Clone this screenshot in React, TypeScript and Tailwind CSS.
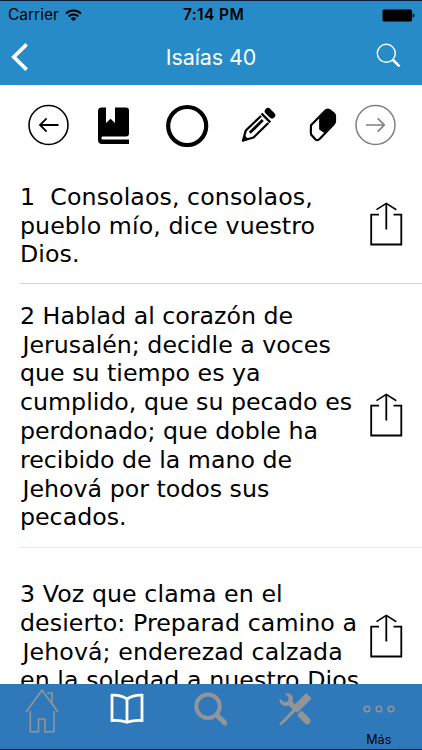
import React from "react";

const verses = [
  {
    id: 1,
    rowClass: "h-[119px] border-[#d2d2d2]",
    textClass: "pt-[4px] tracking-[0.08px]",
    iconClass: "",
    lines: ["1\u00a0 Consolaos, consolaos,", "pueblo mío, dice vuestro", "Dios."],
  },
  {
    id: 2,
    rowClass: "h-[264px] border-[#e8e8e8]",
    textClass: "pt-[3px]",
    iconClass: "pb-[2px]",
    lines: [
      "2 Hablad al corazón de",
      "Jerusalén; decidle a voces",
      "que su tiempo es ya",
      "cumplido, que su pecado es",
      "perdonado; que doble ha",
      "recibido de la mano de",
      "Jehová por todos sus",
      "pecados.",
    ],
  },
  {
    id: 3,
    rowClass: "h-[177px] border-[#e8e8e8]",
    textClass: "pt-[3px] tracking-[0.08px]",
    iconClass: "",
    lines: [
      "3 Voz que clama en el",
      "desierto: Preparad camino a",
      "Jehová; enderezad calzada",
      "en la soledad a nuestro Dios",
    ],
  },
];

export default function App() {
  return (
    <div className="flex h-[750px] w-[422px] flex-col overflow-hidden bg-white font-['Inter','Liberation_Sans',sans-serif] text-black">
      <Header />
      <Toolbar />
      <main className="min-h-0 flex-1 overflow-hidden">
        {verses.map((verse) => (
          <div key={verse.id} className={`ml-5 flex items-center border-b ${verse.rowClass}`}>
            <p
              className={`w-[350px] shrink-0 whitespace-nowrap font-['DejaVu_Sans',sans-serif] text-[23.7px] leading-[28.83px] ${verse.textClass}`}
            >
              {verse.lines.map((line) => (
                <span key={line} className={line.startsWith("J") ? "block pl-[2.5px]" : "block"}>
                  {line}
                </span>
              ))}
            </p>
            <button className={`shrink-0 ${verse.iconClass}`} aria-label="Compartir">
              <ShareIcon />
            </button>
          </div>
        ))}
      </main>
      <TabBar />
    </div>
  );
}

function Header() {
  return (
    <header className="h-[85px] shrink-0 border-t border-[#0b1c3c] bg-[#268bc7]">
      <div className="grid h-7 grid-cols-3 items-center pl-2 pr-[7px]">
        <div className="flex items-center gap-[6px] text-[15.5px]">
          Carrier
          <svg width="17" height="13" viewBox="0 0 17 13" fill="none" stroke="currentColor" strokeWidth="2">
            <path d="M1 4.6a10.8 10.8 0 0 1 15 0" />
            <path d="M3.6 7.5a7.1 7.1 0 0 1 9.8 0" />
            <path d="M8.5 12.3 5.7 9.5a4 4 0 0 1 5.6 0Z" fill="currentColor" stroke="none" />
          </svg>
        </div>
        <div className="whitespace-nowrap pl-1 text-center text-[15.5px] font-semibold tracking-[0.4px]">7:14 PM</div>
        <svg className="justify-self-end" width="33" height="13" viewBox="0 0 33 13">
          <rect x="0.5" y="0.5" width="29.5" height="12" rx="1.5" />
          <path d="M30.7 4.3q1.8.5 1.8 2.2t-1.8 2.2Z" />
        </svg>
      </div>
      <div className="grid h-14 grid-cols-[1fr_auto_1fr] items-center pl-[11px] pr-[21px] text-white">
        <button aria-label="Atrás">
          <svg width="18" height="28" viewBox="0 0 18 28" fill="none" stroke="currentColor" strokeWidth="3.7">
            <path d="M15.6 1.4 2.8 14l12.8 12.6" />
          </svg>
        </button>
        <h1 className="whitespace-nowrap pl-[10px] text-center text-[21.5px] tracking-[-0.1px]">Isaías 40</h1>
        <button className="mb-1 justify-self-end" aria-label="Buscar">
          <svg width="25" height="25" viewBox="0 0 25 25" fill="none" stroke="currentColor">
            <circle cx="10.3" cy="10.3" r="9" strokeWidth="1.4" />
            <path d="m16.5 16.5 7 6.8" strokeWidth="2.5" />
          </svg>
        </button>
      </div>
    </header>
  );
}

function Toolbar() {
  return (
    <div className="flex h-20 shrink-0 items-center pl-7">
      <svg width="42" height="42" viewBox="0 0 42 42" fill="none" stroke="black">
        <circle cx="20.5" cy="21" r="19.5" strokeWidth="1.6" />
        <path d="M30.5 21H12M18.6 14.3 12 21l6.6 6.7" strokeWidth="1.8" />
      </svg>
      <svg className="ml-[27px]" width="34" height="40" viewBox="0 0 34 40">
        <path d="M4.5 2.5H9V18l4.5-4.2L18 18V2.5h11q3 0 3 3v23q0 3-3 3H5.3q-.8 0-.8 1.5t.8 1.5H32v4.5H5q-4 0-4-4V6Q1 2.5 4.5 2.5Z" />
      </svg>
      <svg className="ml-[34px]" width="44" height="44" viewBox="0 0 44 44" fill="none" stroke="black">
        <circle cx="22.2" cy="23" r="19" strokeWidth="4.2" />
      </svg>
      <svg className="ml-[32px]" width="36" height="36" viewBox="0 0 36 36" fill="none" stroke="black">
        <path d="M20 9 4.8 23.5 2 33.5l10.5-3L27.3 16" strokeWidth="2.3" strokeLinejoin="round" />
        <path d="m1.3 34.8 1.6-7L8 32.6Z" fill="black" stroke="none" />
        <path d="m21.8 13-13 12.8" strokeWidth="2.8" />
        <path d="m20.5 6.5 8.8 8.8" strokeWidth="2.4" />
        <path d="m27 4.3 4 4" strokeWidth="6.5" strokeLinecap="round" />
      </svg>
      <svg className="ml-[32px]" width="28" height="36" viewBox="0 0 28 36" stroke="black" strokeWidth="2.2" strokeLinejoin="round">
        <path d="M2 18.3 16.2 3.7Q18 1.8 20.2 3l4.5 3.4q1.4 1.2 1.3 3v5.2q0 1.4-1.3 2.6L10.6 32q-2.1 2-4.3.3L3 28.6q-1.3-1.2-1.2-3.2Z" fill="white" />
        <path d="M10.8 11.5 18 3.6q1.3-1 3 .2l4 3q1 1 1 2.5v5L15.3 25.2l-4.5-3Z" fill="black" strokeWidth="1.3" />
      </svg>
      <svg className="ml-[18px]" width="42" height="42" viewBox="0 0 42 42" fill="none" stroke="#808080">
        <circle cx="20.5" cy="21" r="19.5" strokeWidth="1.5" />
        <path d="M11 21h18.5M22.7 14.3l6.6 6.7-6.6 6.7" strokeWidth="1.7" />
      </svg>
    </div>
  );
}

function ShareIcon() {
  return (
    <svg width="33" height="44" viewBox="0 0 33 44" fill="none" stroke="black">
      <path d="M9 12.7H1.2v29.8h30.1V12.7h-7.8" strokeWidth="1.8" />
      <path d="M16.3 27.5V1.5" strokeWidth="1.8" />
      <path d="M6.5 7.7 16.3 1.4l10 6.3" strokeWidth="1.6" />
    </svg>
  );
}

function TabBar() {
  return (
    <nav className="grid h-[66px] shrink-0 grid-cols-5 border-b border-[#0b1c3c] bg-[#2f79bb] text-[#929497]">
      <button className="flex justify-center pt-[4px]" aria-label="Inicio">
        <svg width="34" height="46" viewBox="0 0 34 46" fill="none" stroke="currentColor" strokeWidth="1.6">
          <path d="M1 24 17 2.2 33 24" />
          <path d="M22.3 5H27v10.5" />
          <path d="M5.3 23v20.7h8.2V31h6.4v12.7H29V23" />
        </svg>
      </button>
      <button className="flex justify-center pt-[9px] text-white" aria-label="Biblia">
        <svg width="34" height="32" viewBox="0 0 34 32" fill="none" stroke="currentColor" strokeWidth="2.8">
          <path d="M2 2.2q8-.7 15 3.8 7-4.5 15-3.8v25.3q-8-.7-15 1.7-7-2.4-15-1.7Z" />
          <path d="M17 6v23" />
        </svg>
      </button>
      <button className="flex justify-center pt-[7px]" aria-label="Buscar">
        <svg width="36" height="36" viewBox="0 0 36 36" fill="none" stroke="currentColor">
          <circle cx="15" cy="15.3" r="11.7" strokeWidth="4" />
          <path d="m24 24.3 7.8 7.6" strokeWidth="5" strokeLinecap="round" />
        </svg>
      </button>
      <button className="flex justify-center pt-[8px]" aria-label="Herramientas">
        <svg width="34" height="35" viewBox="0 0 34 35" fill="currentColor">
          <path d="M7 1.5c6-1.5 9.5 3 7.4 8.2l4.4 4.2-3.7 3.9-4.4-4.4C6 15.4 1 12.3 1.5 6.5l5 3.7 3.7-1 .4-3.6Z" />
          <path d="m19 23 4.7-4.4 8.2 8.2q1.8 2.2-.2 4.4t-4.3.7Z" />
          <path d="m28.2 1 5.4 5.4-14 14.2-2.7-.6L6 31l-3.3 2.5-1.4-1.4L3.800 29 14.500 17.700l-.4-2.500Z" />
        </svg>
      </button>
      <button className="flex flex-col items-center pt-[21px] pr-[2px]">
        <svg width="32" height="8" viewBox="0 0 32 8" fill="none" stroke="currentColor" strokeWidth="1.5">
          <circle cx="4" cy="4" r="2.8" />
          <circle cx="16" cy="4" r="2.8" />
          <circle cx="28" cy="4" r="2.8" />
        </svg>
        <span className="mt-[19px] text-[12.5px] leading-[16px] text-black">Más</span>
      </button>
    </nav>
  );
}
